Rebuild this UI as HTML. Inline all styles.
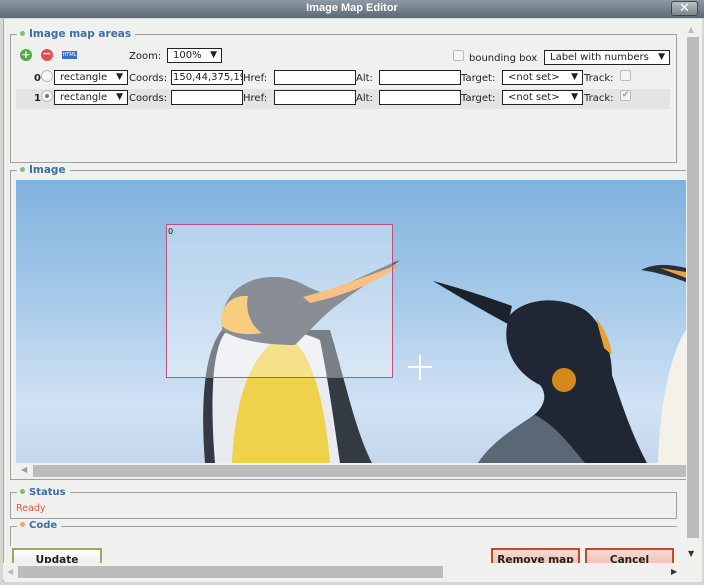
<!DOCTYPE html>
<html><head><meta charset="utf-8"><style>
*{box-sizing:border-box;margin:0;padding:0}
body{width:704px;height:585px;overflow:hidden;background:#d8d6d0;font-family:"DejaVu Sans",Verdana,sans-serif;font-size:10px;color:#222;position:relative}
.abs{position:absolute}
#title{left:0;top:0;width:704px;height:18px;background:linear-gradient(#8d9aa6,#5c6873);color:#fff;font-weight:bold;font-size:11px;text-align:center;line-height:17px;font-family:"Liberation Sans",Arial,sans-serif}
#close{right:6px;top:1px;width:27px;height:15px;border:1px solid #444;border-radius:3px;background:linear-gradient(#b8c0c8,#7b8790);color:#fff;font-weight:bold;text-align:center;line-height:13px;font-size:13px}
#panel{left:3px;top:19px;width:699px;height:563px;background:#f0f0ee;border-left:1px solid #aaa}
.fs{position:absolute;border:1px solid #a0a0a0}
.lg{position:absolute;background:#f0f0ee;padding:0 4px 0 3px;color:#3a6fa8;font-weight:bold;font-size:10.5px;line-height:12px}
.dot{display:inline-block;width:5px;height:5px;border-radius:50%;background:#7dbb7d;margin-right:4px;vertical-align:1px}
.sel,.inp{position:absolute;height:15px;border:1px solid #222;background:#fff;font-size:10px;line-height:13px;padding-left:5px;white-space:nowrap;overflow:hidden}
.sel:after{content:"▼";position:absolute;right:4px;top:0;font-size:9px}
.t{position:absolute;font-size:10px;line-height:12px;white-space:nowrap}
.cb{position:absolute;width:11px;height:11px;border:1px solid #bbb;border-radius:2px;background:#f4f4f4}
.btn{position:absolute;height:18px;font-weight:bold;font-size:10.5px;text-align:center;line-height:16px}
</style></head><body>
<div id="title" class="abs">Image Map Editor</div>
<div id="close" class="abs">✕</div>
<div id="panel" class="abs"></div>

<div class="fs" style="left:10px;top:34px;width:667px;height:129px"></div>
<div class="lg" style="left:17px;top:28px"><span class="dot"></span>Image map areas</div>
<div class="abs" style="left:20px;top:49px;width:12px;height:12px;border-radius:50%;background:#4caf40;color:#fff;font-size:11px;line-height:11px;text-align:center;font-weight:bold">+</div>
<div class="abs" style="left:41px;top:49px;width:12px;height:12px;border-radius:50%;background:#e05050;color:#fff;font-size:11px;line-height:10px;text-align:center;font-weight:bold">−</div>
<div class="abs" style="left:62px;top:51px;width:15px;height:8px;background:#3a6fc8;color:#fff;font-size:5px;line-height:8px;text-align:center">HTML</div>
<div class="t" style="left:129px;top:51px">Zoom:</div>
<div class="sel" style="left:167px;top:48px;width:55px">100%</div>
<div class="cb" style="left:453px;top:50px"></div>
<div class="t" style="left:469px;top:53px">bounding box</div>
<div class="sel" style="left:544px;top:50px;width:126px">Label with numbers</div>

<div class="abs" style="left:16px;top:89px;width:654px;height:20px;background:#e4e4e2"></div>
<div class="t" style="left:34px;top:73px;font-weight:bold">0</div>
<div class="abs" style="left:41px;top:70px;width:12px;height:12px;border-radius:50%;border:1px solid #bbb;background:#f6f6f6"></div>
<div class="sel" style="left:54px;top:70px;width:74px">rectangle</div>
<div class="t" style="left:129px;top:73px">Coords:</div>
<div class="inp" style="left:171px;top:70px;width:72px;padding-left:1px">150,44,375,19</div>
<div class="t" style="left:243px;top:73px">Href:</div>
<div class="inp" style="left:274px;top:70px;width:82px"></div>
<div class="t" style="left:356px;top:73px">Alt:</div>
<div class="inp" style="left:379px;top:70px;width:82px"></div>
<div class="t" style="left:461px;top:73px">Target:</div>
<div class="sel" style="left:502px;top:70px;width:81px">&lt;not set&gt;</div>
<div class="t" style="left:584px;top:73px">Track:</div>
<div class="cb" style="left:620px;top:70px"></div>

<div class="t" style="left:34px;top:93px;font-weight:bold">1</div>
<div class="abs" style="left:41px;top:90px;width:12px;height:12px;border-radius:50%;border:1px solid #bbb;background:#f6f6f6"><div style="margin:3px;width:4px;height:4px;border-radius:50%;background:#777"></div></div>
<div class="sel" style="left:54px;top:90px;width:74px">rectangle</div>
<div class="t" style="left:129px;top:93px">Coords:</div>
<div class="inp" style="left:171px;top:90px;width:72px"></div>
<div class="t" style="left:243px;top:93px">Href:</div>
<div class="inp" style="left:274px;top:90px;width:82px"></div>
<div class="t" style="left:356px;top:93px">Alt:</div>
<div class="inp" style="left:379px;top:90px;width:82px"></div>
<div class="t" style="left:461px;top:93px">Target:</div>
<div class="sel" style="left:502px;top:90px;width:81px">&lt;not set&gt;</div>
<div class="t" style="left:584px;top:93px">Track:</div>
<div class="cb" style="left:620px;top:90px;color:#999;font-size:9px;line-height:9px;text-align:center">✔</div>

<div class="fs" style="left:10px;top:170px;width:677px;height:310px;border-right:none"></div>
<div class="lg" style="left:17px;top:164px"><span class="dot"></span>Image</div>
<svg class="abs" style="left:16px;top:180px" width="670" height="283" viewBox="16 180 670 283">
<defs><linearGradient id="sky" x1="0" y1="0" x2="0" y2="1"><stop offset="0" stop-color="#7fb2de"/><stop offset=".45" stop-color="#a9cbea"/><stop offset=".8" stop-color="#d2e2f4"/><stop offset="1" stop-color="#c4d6ec"/></linearGradient></defs>
<rect x="16" y="180" width="670" height="283" fill="url(#sky)"/>
<!-- left penguin -->
<path d="M205 463 C200 400 205 350 222 330 L330 330 C345 380 355 430 372 463Z" fill="#333a44"/>
<path d="M215 463 C210 400 212 350 225 333 C260 325 300 330 320 340 C330 390 335 430 340 463Z" fill="#e8ecf0"/>
<path d="M232 463 C235 400 250 350 285 335 C310 345 325 400 330 463Z" fill="#eed24c"/>
<path d="M222 322 C222 292 248 276 275 277 C298 277 308 290 325 293 C350 283 375 270 400 260 C375 280 340 300 320 320 C310 330 300 340 295 345 C265 345 235 340 222 330Z" fill="#4a515c"/>
<path d="M221 325 C220 305 232 295 248 296 C245 310 250 325 262 333 C245 336 228 333 221 325Z" fill="#f2b43a"/>
<path d="M303 297 C330 290 370 275 400 264 C380 282 340 297 310 303Z" fill="#f2a040"/>
<!-- right penguin -->
<path d="M433 281 C460 288 490 298 512 306 L508 324 C482 310 456 295 433 281Z" fill="#1a222c"/>
<path d="M478 463 C492 442 515 428 530 418 C545 408 548 395 540 385 C510 370 500 340 510 315 C525 298 560 295 585 310 C605 325 612 355 612 375 C622 405 632 435 647 463Z" fill="#1e2733"/>
<path d="M478 463 C492 442 515 428 535 415 C555 425 570 445 585 463Z" fill="#5a6774"/>
<circle cx="564" cy="380" r="12" fill="#d48a1a"/>
<path d="M596 318 C604 328 610 340 612 355 L604 348Z" fill="#e8a030"/>
<!-- third penguin -->
<path d="M658 463 C660 400 672 350 686 330 L686 463Z" fill="#f4f2e8"/>
<path d="M641 270 C655 263 670 264 686 268 L686 282 C670 276 655 272 641 270Z" fill="#2a2f38"/>
<path d="M660 268 L686 272 L686 278Z" fill="#f2a040"/>
<rect x="166.5" y="224.5" width="226" height="153" fill="rgba(255,255,255,.35)" stroke="#c0507a" stroke-width="1"/>
<text x="168" y="234" font-size="8" font-family="DejaVu Sans" fill="#111">0</text>
<path d="M420 355V380M408 367H432" stroke="#fff" stroke-width="2"/>
</svg>
<div class="abs" style="left:16px;top:464px;width:670px;height:13px;background:#f0f0ee"></div>
<div class="abs" style="left:33px;top:465px;width:653px;height:12px;background:#bcbcbc"></div>
<div class="t" style="left:21px;top:464px;color:#999;font-size:8px">◀</div>

<div class="fs" style="left:10px;top:492px;width:667px;height:27px"></div>
<div class="lg" style="left:17px;top:487px;font-size:10px"><span class="dot"></span>Status</div>
<div class="t" style="left:16px;top:503px;color:#e05a3a;font-size:9.5px">Ready</div>
<div class="abs" style="left:10px;top:526px;width:667px;height:1px;background:#a0a0a0"></div>
<div class="abs" style="left:10px;top:526px;width:1px;height:20px;background:#a0a0a0"></div>
<div class="lg" style="left:17px;top:520px;font-size:10px"><span class="dot" style="background:#f0a860"></span>Code</div>

<div class="btn" style="left:12px;top:548px;width:90px;border:2px solid #9aaa60;background:linear-gradient(#fff,#ececec);padding-top:2px">Update</div>
<div class="btn" style="left:491px;top:548px;width:89px;border:2px solid #c04a30;background:linear-gradient(#fbd9d0,#f3c1b4);padding-top:2px">Remove map</div>
<div class="btn" style="left:585px;top:548px;width:89px;border:2px solid #c04a30;background:linear-gradient(#fbd9d0,#f3c1b4);padding-top:2px">Cancel</div>

<div class="abs" style="left:686px;top:19px;width:15px;height:547px;background:#f0f0ee"></div>
<div class="abs" style="left:687px;top:37px;width:12px;height:501px;background:#bcbcbc"></div>
<div class="t" style="left:688px;top:24px;color:#bbb;font-size:8px">▲</div>
<div class="t" style="left:688px;top:548px;color:#333;font-size:8px">▼</div>
<div class="abs" style="left:3px;top:563px;width:683px;height:17px;background:#f0f0ee"></div>
<div class="abs" style="left:18px;top:566px;width:425px;height:12px;background:#bcbcbc"></div>
<div class="t" style="left:7px;top:566px;color:#bbb;font-size:8px">◀</div>
<div class="t" style="left:671px;top:566px;color:#333;font-size:8px">▶</div>
</body></html>
